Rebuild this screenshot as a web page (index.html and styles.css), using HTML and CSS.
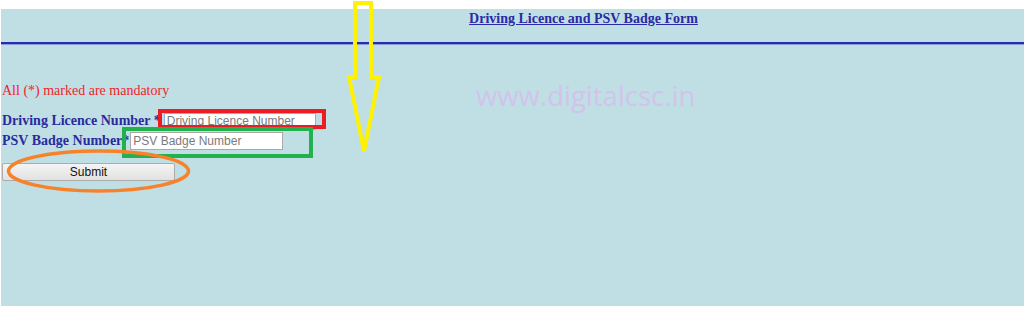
FILE: index.html
```html
<!DOCTYPE html>
<html>
<head>
<meta charset="utf-8">
<link rel="stylesheet" href="styles.css">
</head>
<body>
<div class="page">
  <div class="header"><a class="title" href="#">Driving Licence and PSV Badge Form</a></div>
  <div class="rule"></div>
  <div class="content">
    <div class="mandatory">All (*) marked are mandatory</div>
    <div class="row row1">
      <label class="label">Driving Licence Number *</label>
      <input class="field field1" type="text" placeholder="Driving Licence Number">
    </div>
    <div class="row row2">
      <label class="label">PSV Badge Number*</label>
      <input class="field field2" type="text" placeholder="PSV Badge Number">
    </div>
    <button class="submit" type="button">Submit</button>
  </div>
  <div class="watermark">www.digitalcsc.in</div>
</div>
<svg class="marks" width="1024" height="318" viewBox="0 0 1024 318">
  <rect x="160" y="111" width="164" height="16" fill="none" stroke="#ec1c24" stroke-width="4"/>
  <rect x="124" y="129" width="187" height="27" fill="none" stroke="#22b14c" stroke-width="4"/>
  <ellipse cx="98.5" cy="171" rx="90" ry="20" fill="none" stroke="#f7822a" stroke-width="3.5"/>
  <path d="M355 3 L371 3 L371 77 L379 77 L364 151 L349 77 L355 77 Z" fill="none" stroke="#fff200" stroke-width="4" stroke-linejoin="miter"/>
</svg>
</body>
</html>
```
FILE: styles.css
```css
html, body {
  margin: 0;
  padding: 0;
  background: #ffffff;
}
body {
  position: relative;
  width: 1024px;
  height: 318px;
  overflow: hidden;
  font-family: "Liberation Serif", "Times New Roman", serif;
}
.page {
  position: relative;
  margin-top: 9px;
  margin-left: 1px;
  height: 297px;
  background: #c0dfe4;
}
.header {
  padding-left: 142px;
  text-align: center;
  height: 33px;
}
.title {
  font-size: 14px;
  font-weight: bold;
  color: #2a2aa6;
  text-decoration: underline;
  line-height: 16px;
}
.rule {
  height: 2px;
  background: #2b2bb2;
  border-bottom: 1px solid #8f98d6;
}
.content {
  padding-left: 1px;
  padding-top: 38px;
}
.mandatory {
  color: #f2232a;
  font-size: 14px;
  line-height: 16px;
}
.row {
  display: flex;
  align-items: center;
}
.row1 {
  margin-top: 13px;
  height: 18px;
}
.row2 {
  margin-top: 1px;
  height: 20px;
}
.label {
  font-size: 14px;
  font-weight: bold;
  color: #2a2a9e;
  line-height: 16px;
}
.field {
  box-sizing: border-box;
  height: 17px;
  border: 1px solid #a9a9a9;
  background: #ffffff;
  font-family: "Liberation Sans", Arial, sans-serif;
  font-size: 12px;
  padding: 0 2px;
  margin-left: 3px;
}
.field::placeholder {
  color: #7b7b7b;
}
.field1 {
  width: 152px;
  border-color: #8fb0e0;
}
.field2 {
  width: 153px;
  height: 18px;
  margin-left: 1px;
}
.submit {
  display: block;
  margin-top: 12px;
  width: 173px;
  height: 18px;
  padding: 0;
  border: 1px solid #acacac;
  border-radius: 2px;
  background: linear-gradient(#f4f4f4, #e2e2e2);
  font-family: "Liberation Sans", Arial, sans-serif;
  font-size: 12px;
  color: #111111;
}
.watermark {
  position: absolute;
  left: 475px;
  top: 71px;
  font-family: "Open Sans", "Noto Sans", sans-serif;
  font-size: 27.5px;
  color: #d3c2ec;
  line-height: 32px;
}
.marks {
  position: absolute;
  left: 0;
  top: 0;
  pointer-events: none;
}
```
